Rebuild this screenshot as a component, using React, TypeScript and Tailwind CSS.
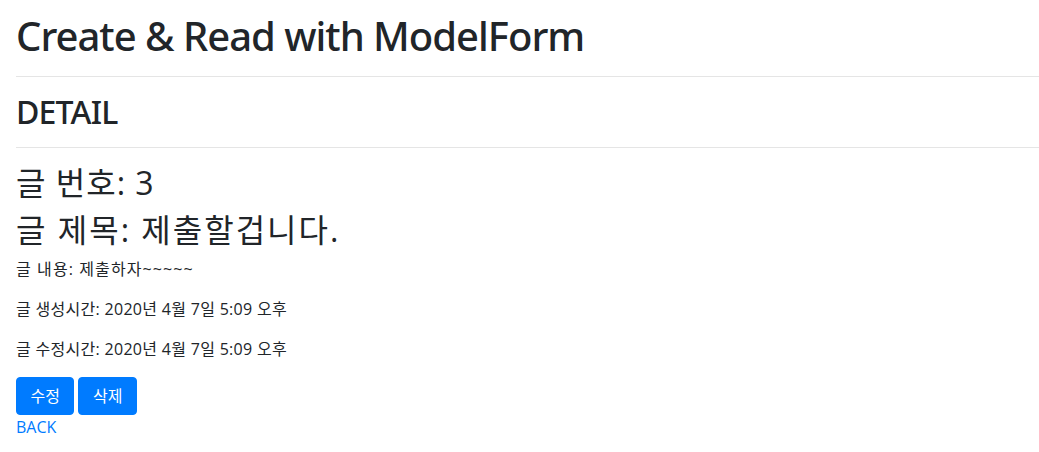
export default function App() {
  return (
    <div
      className="min-h-[452px] bg-white pl-4 pt-3 text-[#212529]"
      style={{ fontFamily: '"Open Sans", "Noto Sans CJK KR", sans-serif' }}
    >
      <h1
        className="text-[40px] font-medium leading-[48px] tracking-[-1px]"
        style={{ fontFamily: '"Noto Sans", "Open Sans", sans-serif' }}
      >
        Create &amp; Read with ModelForm
      </h1>
      <hr className="my-4 border-t border-black/10" />
      <h2
        className="text-[32px] font-medium leading-[38.4px] tracking-[-0.8px]"
        style={{ fontFamily: '"Noto Sans", "Open Sans", sans-serif' }}
      >
        DETAIL
      </h2>
      <hr className="my-4 border-t border-black/10" />

      <h2 className="mb-2 text-[32px] font-normal leading-[38.4px] tracking-[1px]">글 번호: 3</h2>
      <h2 className="mb-2 text-[32px] font-normal leading-[38.4px] tracking-[2px]">글 제목: 제출할겁니다.</h2>
      <p className="mb-4 text-base leading-6 tracking-[1.1px]">글 내용: 제출하자~~~~~</p>
      <p className="mb-4 text-base leading-6 tracking-[0.3px]">글 생성시간: 2020년 4월 7일 5:09 오후</p>
      <p className="mb-4 text-base leading-6 tracking-[0.3px]">글 수정시간: 2020년 4월 7일 5:09 오후</p>

      <div className="flex gap-1">
        <button className="rounded border border-[#007bff] bg-[#007bff] px-[13.5px] py-1.5 text-base leading-6 text-white">수정</button>
        <button className="rounded border border-[#007bff] bg-[#007bff] px-[13.5px] py-1.5 text-base leading-6 text-white">삭제</button>
      </div>
      <a href="#" className="block text-base leading-6 text-[#007bff]">BACK</a>
    </div>
  );
}
